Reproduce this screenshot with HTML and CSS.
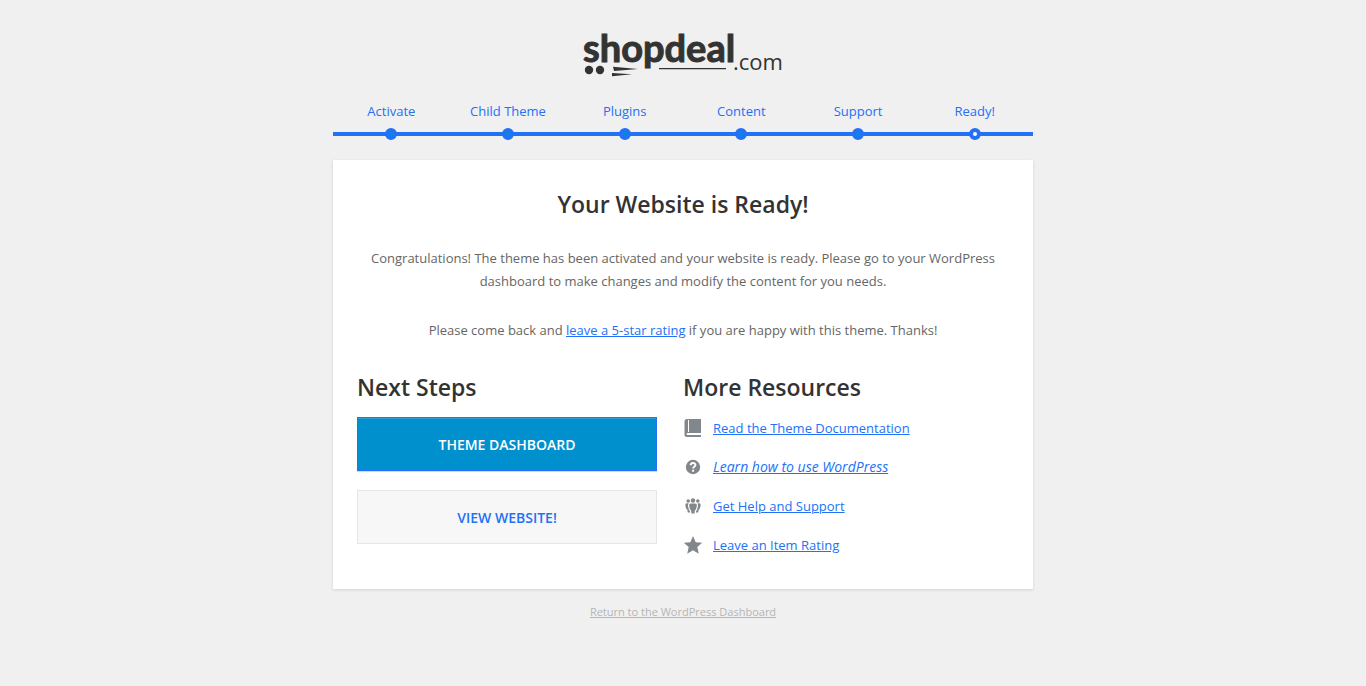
FILE: index.html
```html
<!DOCTYPE html>
<html lang="en">
<head>
<meta charset="utf-8">
<meta name="viewport" content="width=device-width, initial-scale=1">
<title>Theme Setup - Ready!</title>
<link rel="stylesheet" href="styles.css">
</head>
<body>
<div class="setup">
  <header class="brand">
    <a class="brand-link" href="#" aria-label="shopdeal.com">
      <svg class="logo" viewBox="0 0 200 50" width="200" height="50">
        <text class="logo-name" x="0" y="34">shopdeal</text>
        <text class="logo-tld" x="150" y="42">.com</text>
        <circle cx="6" cy="42" r="4.200"/>
        <circle cx="17" cy="42" r="4.200"/>
        <path d="M30 38.800 55 41 31 43ZM29 45 49 46.200 29 48.200Z"/>
        <path d="M76 40h67v1.2H76z"/>
      </svg>
    </a>
  </header>
  <ol class="steps">
    <li class="step">Activate</li>
    <li class="step">Child Theme</li>
    <li class="step">Plugins</li>
    <li class="step">Content</li>
    <li class="step">Support</li>
    <li class="step step-current" aria-current="step">Ready!</li>
  </ol>
  <main class="card">
    <h1 class="title">Your Website is Ready!</h1>
    <p class="text">Congratulations! The theme has been activated and your website is ready. Please go to your WordPress dashboard to make changes and modify the content for you needs.</p>
    <p class="text">Please come back and <a href="#">leave a 5-star rating</a> if you are happy with this theme. Thanks!</p>
    <div class="columns">
      <section class="column">
        <h2 class="heading">Next Steps</h2>
        <div class="buttons">
          <a class="button button-primary" href="#">THEME DASHBOARD</a>
          <a class="button" href="#">VIEW WEBSITE!</a>
        </div>
      </section>
      <section class="column">
        <h2 class="heading">More Resources</h2>
        <ul class="resources">
          <li class="resource">
            <svg class="icon" viewBox="0 0 20 20" aria-hidden="true"><path fill-rule="evenodd" d="M4 1h14v14H4.500a1 1 0 0 0 0 2H18v2H4a2.500 2.500 0 0 1-2.500-2.500v-13A2.500 2.500 0 0 1 4 1zM5 2v12h1V2z"/></svg>
            <a href="#">Read the Theme Documentation</a>
          </li>
          <li class="resource">
            <svg class="icon" viewBox="0 0 20 20" aria-hidden="true"><circle cx="10" cy="10" r="7.200"/><path class="icon-line" d="M7.700 8.300C7.700 5.300 12.400 5.300 12.400 8c0 1.700-2.300 1.700-2.300 3.500M10.100 12.800v1.900"/></svg>
            <a class="resource-italic" href="#">Learn how to use WordPress</a>
          </li>
          <li class="resource">
            <svg class="icon" viewBox="0 0 20 20" aria-hidden="true"><circle cx="10" cy="4.500" r="2.200"/><circle cx="5.200" cy="5" r="1.800"/><circle cx="14.800" cy="5" r="1.800"/><path d="M8 7.500h4c1.500 0 2 1 1.800 2.500l-.8 3.500-1 .5-.5 3.500h-3L8 14l-1-.5-.8-3.500C6 8.500 6.500 7.500 8 7.500zM5.600 7.400c-.6.900-.7 2-.5 3l1 3.800.7.600.3 1.700H4.800l-.6-3-1-.7-.8-3c-.3-1.700.5-2.500 1.800-2.500zM14.400 7.400c.6.900.7 2 .5 3l-1 3.800-.7.600-.3 1.700h2.300l.6-3 1-.7.8-3c.3-1.700-.5-2.500-1.800-2.500z"/></svg>
            <a href="#">Get Help and Support</a>
          </li>
          <li class="resource">
            <svg class="icon" viewBox="0 0 20 20" aria-hidden="true"><path d="M10 1l2.700 6.200 6.500.6-4.900 4.300 1.500 6.600-5.800-3.500-5.800 3.500 1.500-6.600L.8 7.800l6.500-.6z"/></svg>
            <a href="#">Leave an Item Rating</a>
          </li>
        </ul>
      </section>
    </div>
  </main>
  <footer class="footer"><a href="#">Return to the WordPress Dashboard</a></footer>
</div>
</body>
</html>
```
FILE: styles.css
```css
*,
*::before {
  box-sizing: border-box;
}

body {
  margin: 0;
  background: #f0f0f0;
  color: #666;
  font-family: "Open Sans", "Noto Sans", sans-serif;
  font-size: 13px;
}

a {
  color: #2271f7;
}

.setup {
  max-width: 700px;
  margin: 0 auto;
  padding: 28px 0 24px;
}

.brand {
  display: flex;
  justify-content: center;
}

.brand-link,
.logo {
  display: block;
}

.logo {
  fill: #333;
  overflow: visible;
}

.logo-name {
  font: 700 38px Lato, sans-serif;
  stroke: #333;
  stroke-width: 1;
}

.logo-tld {
  font: 400 22px "Open Sans", sans-serif;
}

.steps {
  display: flex;
  margin: 23px 0 24px;
  padding: 0;
  list-style: none;
  color: #2271f7;
  line-height: 20px;
}

.step {
  position: relative;
  flex: 1;
  padding-bottom: 11px;
  border-bottom: 4px solid currentColor;
  text-align: center;
}

.step::before {
  content: "";
  position: absolute;
  bottom: -8px;
  left: 50%;
  width: 12px;
  height: 12px;
  margin-left: -6px;
  border: 4px solid #2271f7;
  border-radius: 50%;
  background: #0090cd;
}

.step-current::before {
  background: #fff;
}

.card {
  padding: 25px 24px 32px;
  background: #fff;
  box-shadow: 0 1px 3px rgba(0, 0, 0, 0.13);
}

.title,
.heading {
  margin: 0;
  color: #333;
  font-size: 23px;
  font-weight: 600;
  line-height: 38px;
}

.title {
  margin-bottom: 24px;
  text-align: center;
}

.text {
  margin: 0 0 26px;
  line-height: 23px;
  text-align: center;
}

.columns {
  display: grid;
  grid-template-columns: 1fr 1fr;
}

.heading {
  margin-bottom: 11px;
}

.buttons {
  display: grid;
  gap: 19px;
  padding-right: 26px;
}

.button {
  padding: 16px 15px 14px;
  border: 1px solid #e6e6e6;
  background: #f7f7f7;
  font-weight: 600;
  font-size: 14px;
  line-height: 22px;
  text-align: center;
  text-decoration: none;
}

.button-primary {
  border-color: #2271f7;
  background: #0090cd;
  box-shadow: inset 0 1px 0 #2e9fd6, 0 1px 0 #d9d9d9;
  color: #fff;
}

.resources {
  display: grid;
  gap: 17px;
  margin: 0;
  padding: 0 0 1px;
  list-style: none;
}

.resource {
  display: flex;
  align-items: center;
  gap: 10px;
  line-height: 22px;
}

.resource-italic {
  font-size: 14px;
  font-style: italic;
}

.icon {
  width: 20px;
  height: 20px;
  fill: #82878c;
}

.icon-line {
  fill: none;
  stroke: #fff;
  stroke-width: 2;
}

.footer {
  padding-top: 14px;
  font-size: 11px;
  line-height: 18px;
  text-align: center;
}

.footer a {
  color: #b5b5b5;
}
```
